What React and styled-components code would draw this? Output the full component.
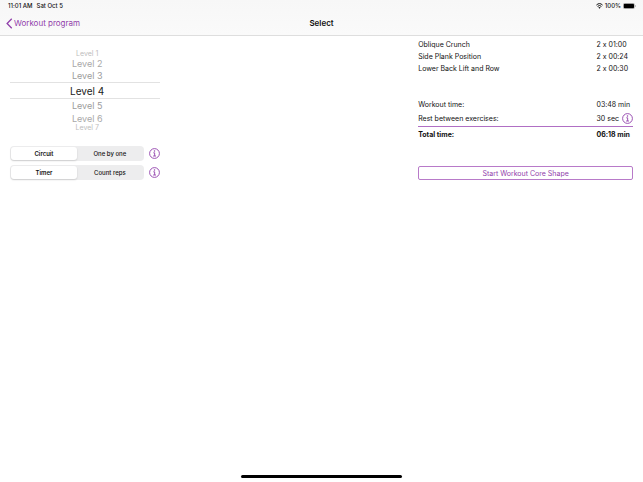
import React, { useState } from "react";
import styled, { createGlobalStyle } from "styled-components";

const GlobalStyle = createGlobalStyle`
  * {
    box-sizing: border-box;
  }

  body {
    margin: 0;
    background: #ffffff;
    color: #111111;
    font-family: Inter, "Liberation Sans", sans-serif;
    font-size: 7px;
    font-feature-settings: "calt" 0;
  }
`;

const Page = styled.div`
  min-height: 100vh;
  display: flex;
  flex-direction: column;
`;

const Header = styled.header`
  background: linear-gradient(#f7f7f7, #fafafa);
  border-bottom: 1px solid #dedede;
`;

const StatusBar = styled.div`
  display: flex;
  justify-content: space-between;
  height: 12px;
  padding: 0 7px 0 8px;
  font-size: 6px;
  font-weight: 500;
  line-height: 12px;
`;

const StatusGroup = styled.div`
  display: flex;
  align-items: center;
  gap: ${(props) => props.$gap};
`;

const NavBar = styled.nav`
  display: grid;
  grid-template-columns: 1fr auto 1fr;
  align-items: center;
  height: 23px;
  padding: 0 6px 1px;
`;

const BackLink = styled.a`
  display: flex;
  align-items: center;
  gap: 1px;
  color: #9140ab;
  font-size: 8px;
  text-decoration: none;
`;

const Title = styled.h1`
  margin: 0;
  font-size: 8px;
  font-weight: 600;
`;

const Main = styled.main`
  flex: 1;
  display: grid;
  grid-template-columns: 7fr 12fr 10fr;
  align-items: start;
  padding: 0 10px;
`;

const Options = styled.section`
  padding-top: 14px;
`;

const Picker = styled.fieldset`
  display: flex;
  flex-direction: column;
  min-width: 0;
  margin: 0 0 15px;
  padding: 0;
  border: 0;
`;

const HiddenInput = styled.input`
  position: absolute;
  opacity: 0;
  width: 1px;
  height: 1px;
  margin: 0;
`;

const Level = styled.label`
  display: flex;
  align-items: center;
  justify-content: center;
  height: ${(props) => props.$height};
  padding-left: 4px;
  color: ${(props) => props.$color};
  font-size: ${(props) => props.$size};
  line-height: 1;
  border: solid #e2e2e2;
  border-width: ${(props) => (props.$picked ? "1px 0" : "0")};
`;

const OptionRow = styled.div`
  display: flex;
  align-items: center;
  gap: 5px;
  margin-bottom: 4px;
`;

const Segments = styled.fieldset`
  flex: 1;
  max-width: 89%;
  min-width: 0;
  display: grid;
  grid-template-columns: 1fr 1fr;
  height: 15px;
  margin: 0;
  padding: 1px;
  border: 0;
  border-radius: 4px;
  background: #ededee;
`;

const Segment = styled.label`
  display: flex;
  align-items: center;
  justify-content: center;
  border-radius: 3px;
  font-size: 6px;
  font-weight: ${(props) => (props.$on ? 600 : 500)};
  background: ${(props) => (props.$on ? "#ffffff" : "transparent")};
  box-shadow: ${(props) => (props.$on ? "0 1px 2px rgba(0, 0, 0, 0.14)" : "none")};
`;

const InfoButton = styled.button`
  display: flex;
  flex: none;
  padding: 0;
  border: 0;
  background: none;
  color: #9140ab;
`;

const Summary = styled.section`
  grid-column: 3;
  padding-top: 2px;
`;

const Table = styled.table`
  width: 100%;
  table-layout: fixed;
  border-spacing: 0;
  margin-bottom: ${(props) => props.$space};
`;

const Name = styled.th`
  height: ${(props) => props.$height || "12px"};
  padding: 0;
  text-align: left;
  font-weight: ${(props) => (props.$bold ? 700 : 400)};
  border-top: ${(props) => (props.$bold ? "1px solid #b06fc4" : "0")};
`;

const Value = styled.td`
  width: 17%;
  padding: 0;
  white-space: nowrap;
  font-weight: ${(props) => (props.$bold ? 700 : 400)};
  border-top: ${(props) => (props.$bold ? "1px solid #b06fc4" : "0")};
`;

const ValueRow = styled.div`
  display: flex;
  align-items: center;
  justify-content: space-between;
`;

const StartButton = styled.button`
  width: 100%;
  height: 14px;
  padding: 0;
  border: 1px solid #b87ac9;
  border-radius: 2px;
  background: #ffffff;
  color: #9140ab;
  font-family: inherit;
  font-size: 7px;
`;

const Footer = styled.footer`
  display: flex;
  justify-content: center;
  padding-bottom: 4px;
`;

const HomeBar = styled.div`
  width: 25%;
  height: 3px;
  border-radius: 2px;
  background: #000000;
`;

const levels = [
  { name: "Level 1", height: "7px", size: "7px", color: "#bdbdbd" },
  { name: "Level 2", height: "12px", size: "9px", color: "#a8a8a8" },
  { name: "Level 3", height: "13px", size: "9px", color: "#9c9c9c" },
  { name: "Level 4", height: "17px", size: "10px", color: "#1c1c1c" },
  { name: "Level 5", height: "13px", size: "9px", color: "#9c9c9c" },
  { name: "Level 6", height: "12px", size: "9px", color: "#a8a8a8" },
  { name: "Level 7", height: "7px", size: "7px", color: "#bdbdbd" },
];

const exercises = [
  ["Oblique Crunch", "2 x 01:00"],
  ["Side Plank Position", "2 x 00:24"],
  ["Lower Back Lift and Row", "2 x 00:30"],
];

const Info = ({ label }) => (
  <InfoButton type="button" aria-label={label}>
    <svg width="11" height="11" viewBox="0 0 22 22" fill="none" stroke="currentColor">
      <circle cx="11" cy="11" r="9.8" strokeWidth="1.8" />
      <circle cx="11" cy="6.2" r="1.5" fill="currentColor" stroke="none" />
      <path d="M8.6 9.6h2.700v6.200M8.200 16h5.800" strokeWidth="1.8" />
    </svg>
  </InfoButton>
);

const Toggle = ({ name, options }) => {
  const [value, setValue] = useState(options[0]);
  return (
    <OptionRow>
      <Segments aria-label={name}>
        {options.map((option) => (
          <Segment key={option} $on={option === value}>
            <HiddenInput
              type="radio"
              name={name}
              checked={option === value}
              onChange={() => setValue(option)}
            />
            {option}
          </Segment>
        ))}
      </Segments>
      <Info label={`About ${name}`} />
    </OptionRow>
  );
};

const App = () => {
  const [level, setLevel] = useState("Level 4");

  return (
    <Page>
      <GlobalStyle />
      <Header>
        <StatusBar>
          <StatusGroup $gap="4px">
            <span>11:01 AM</span>
            <span>Sat Oct 5</span>
          </StatusGroup>
          <StatusGroup $gap="2px">
            <svg width="7" height="6" viewBox="0 0 12 10" fill="none" stroke="#111">
              <path d="M.7 3.4a7.6 7.6 0 0 1 10.6 0M2.7 5.7a4.7 4.7 0 0 1 6.6 0" strokeWidth="1.7" />
              <path d="M6 9.7 4 7.6a2.9 2.9 0 0 1 4 0z" fill="#111" stroke="none" />
            </svg>
            <span>100%</span>
            <svg width="13" height="6" viewBox="0 0 26 12">
              <rect x=".5" y=".5" width="22.5" height="11" rx="3" fill="#fff" stroke="#888" />
              <rect x="1.5" y="1.5" width="20.5" height="9" rx="2" fill="#000" />
              <path d="M24 4c2 .5 2 3.5 0 4z" fill="#888" />
            </svg>
          </StatusGroup>
        </StatusBar>
        <NavBar>
          <BackLink href="#program">
            <svg width="7" height="11" viewBox="0 0 14 22" fill="none" stroke="currentColor">
              <path d="M11.5 1.5 2.200 11l9.300 9.500" strokeWidth="2.6" />
            </svg>
            Workout program
          </BackLink>
          <Title>Select</Title>
        </NavBar>
      </Header>

      <Main>
        <Options>
          <Picker aria-label="Level">
            {levels.map((item) => (
              <Level
                key={item.name}
                $height={item.height}
                $size={item.size}
                $color={item.color}
                $picked={item.name === level}
              >
                <HiddenInput
                  type="radio"
                  name="level"
                  checked={item.name === level}
                  onChange={() => setLevel(item.name)}
                />
                {item.name}
              </Level>
            ))}
          </Picker>
          <Toggle name="order" options={["Circuit", "One by one"]} />
          <Toggle name="counting" options={["Timer", "Count reps"]} />
        </Options>

        <Summary>
          <Table $space="24px">
            <tbody>
              {exercises.map(([name, reps]) => (
                <tr key={name}>
                  <Name scope="row">{name}</Name>
                  <Value>{reps}</Value>
                </tr>
              ))}
            </tbody>
          </Table>
          <Table $space="24px">
            <tbody>
              <tr>
                <Name scope="row">Workout time:</Name>
                <Value>03:48 min</Value>
              </tr>
              <tr>
                <Name scope="row" $height="16px">Rest between exercises:</Name>
                <Value>
                  <ValueRow>
                    30 sec
                    <Info label="About rest" />
                  </ValueRow>
                </Value>
              </tr>
              <tr>
                <Name scope="row" $bold $height="16px">Total time:</Name>
                <Value $bold>06:18 min</Value>
              </tr>
            </tbody>
          </Table>
          <StartButton type="button">Start Workout Core Shape</StartButton>
        </Summary>
      </Main>

      <Footer>
        <HomeBar />
      </Footer>
    </Page>
  );
};

export default App;
